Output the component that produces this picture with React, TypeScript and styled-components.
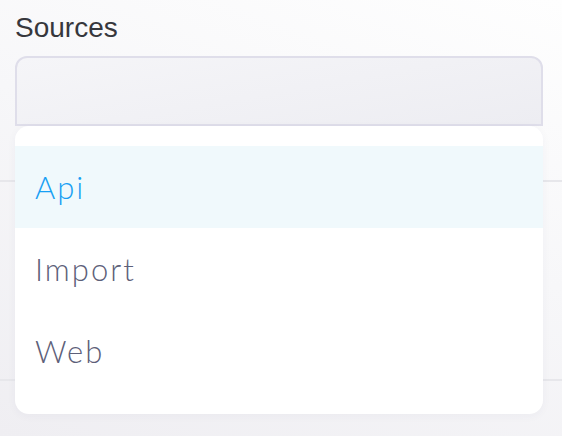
import { useState } from "react";
import styled, { createGlobalStyle } from "styled-components";

const GlobalStyle = createGlobalStyle`
  *, *::before, *::after {
    box-sizing: border-box;
  }
  html, body {
    margin: 0;
    padding: 0;
  }
  body {
    width: 562px;
    height: 436px;
    overflow: hidden;
    background: linear-gradient(200deg, #fefefe 0%, #f7f7f9 45%, #efeef2 100%);
  }
`;

const Page = styled.div`
  position: relative;
  width: 562px;
  height: 436px;
`;

const Field = styled.div`
  display: flex;
  flex-direction: column;
  padding: 12px 19px 0 15px;
`;

const Label = styled.label`
  font-family: "Liberation Sans", Arial, sans-serif;
  font-size: 28px;
  line-height: 32px;
  color: #36373c;
  margin-bottom: 12px;
`;

const SelectBox = styled.div`
  height: 70px;
  border: 2px solid #dfdeea;
  border-radius: 12px 12px 0 0;
  background: linear-gradient(170deg, #f5f5f8 0%, #ededf2 100%);
`;

const FormRow = styled.div<{ $height: number }>`
  height: ${(p) => p.$height}px;
  border-bottom: 2px solid #e7e7eb;
`;

const Menu = styled.ul`
  position: absolute;
  left: 15px;
  top: 126px;
  width: 528px;
  margin: 0;
  padding: 20px 0 22px;
  list-style: none;
  background: #ffffff;
  border-radius: 14px;
  box-shadow: 0 2px 10px rgba(60, 60, 90, 0.04);
`;

const Option = styled.li<{ $active: boolean }>`
  display: flex;
  align-items: center;
  height: 82px;
  padding-left: 20px;
  font-family: Lato, "Open Sans", sans-serif;
  font-weight: 300;
  font-size: 31px;
  letter-spacing: 2px;
  color: ${(p) => (p.$active ? "#17a0f4" : "#5d6079")};
  background: ${(p) => (p.$active ? "#f0f9fc" : "transparent")};
  cursor: pointer;
`;

const sources = ["Api", "Import", "Web"];

export default function App() {
  const [active, setActive] = useState("Api");
  return (
    <Page>
      <GlobalStyle />
      <Field>
        <Label>Sources</Label>
        <SelectBox />
      </Field>
      <FormRow $height={56} />
      <FormRow $height={199} />
      <Menu>
        {sources.map((s) => (
          <Option key={s} $active={s === active} onMouseEnter={() => setActive(s)}>
            {s}
          </Option>
        ))}
      </Menu>
    </Page>
  );
}
